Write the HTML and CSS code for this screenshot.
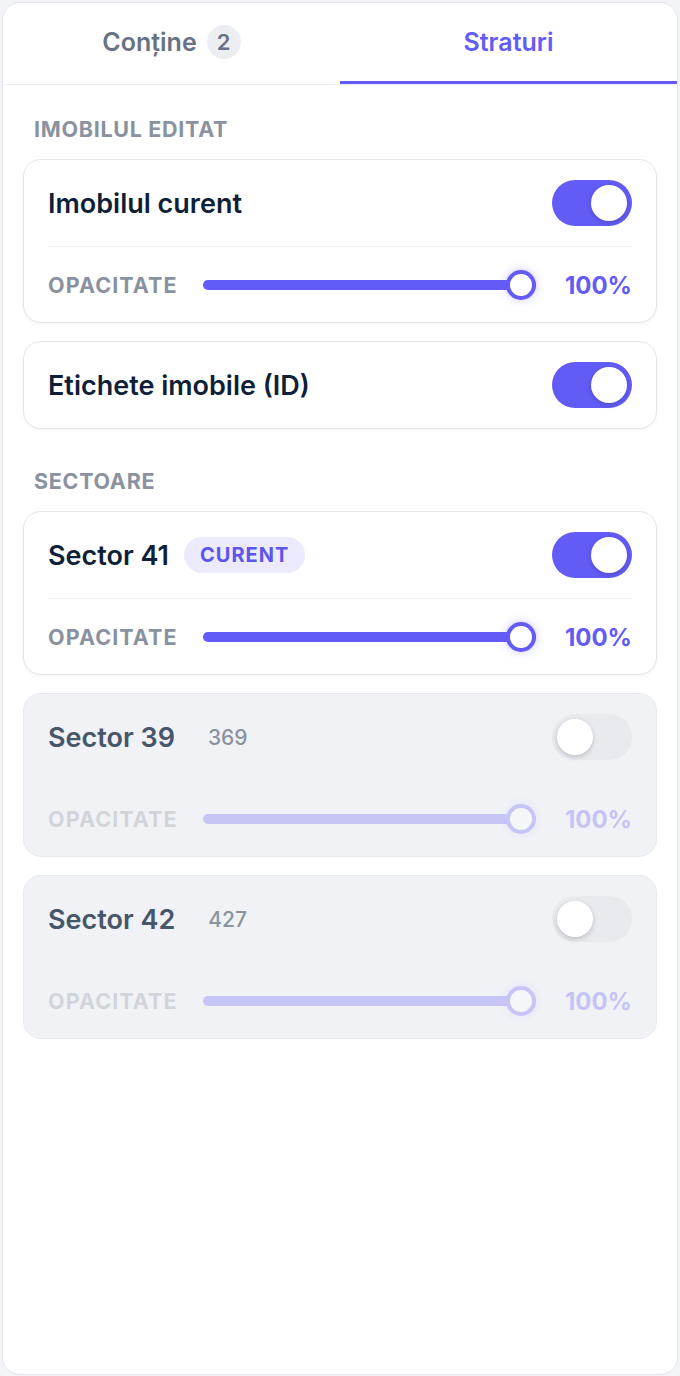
FILE: index.html
```html
<!DOCTYPE html>
<html lang="ro">
<head>
    <meta charset="UTF-8">
    <meta name="viewport" content="width=device-width, initial-scale=1.0">
    <title>Straturi</title>
    <link rel="stylesheet" href="styles.css">
</head>
<body>
    <div class="panel">
        <div class="tabs">
            <div class="tab">Conține <span class="tab-count">2</span></div>
            <div class="tab active">Straturi</div>
        </div>

        <div class="content">
            <div class="section-label">Imobilul editat</div>

            <div class="card">
                <div class="card-head">
                    <span class="card-title">Imobilul curent</span>
                    <span class="toggle on"><span class="knob"></span></span>
                </div>
                <div class="opacity-row">
                    <span class="opacity-label">Opacitate</span>
                    <div class="slider"><div class="fill" style="width: 100%"></div><span class="thumb"></span></div>
                    <span class="opacity-value">100%</span>
                </div>
            </div>

            <div class="card">
                <div class="card-head">
                    <span class="card-title">Etichete imobile (ID)</span>
                    <span class="toggle on"><span class="knob"></span></span>
                </div>
            </div>

            <div class="section-label spaced">Sectoare</div>

            <div class="card">
                <div class="card-head">
                    <span class="card-title">Sector 41</span>
                    <span class="badge">Curent</span>
                    <span class="toggle on"><span class="knob"></span></span>
                </div>
                <div class="opacity-row">
                    <span class="opacity-label">Opacitate</span>
                    <div class="slider"><div class="fill" style="width: 100%"></div><span class="thumb"></span></div>
                    <span class="opacity-value">100%</span>
                </div>
            </div>

            <div class="card disabled">
                <div class="card-head">
                    <span class="card-title">Sector 39</span>
                    <span class="count">369</span>
                    <span class="toggle"><span class="knob"></span></span>
                </div>
                <div class="opacity-row">
                    <span class="opacity-label">Opacitate</span>
                    <div class="slider"><div class="fill" style="width: 100%"></div><span class="thumb"></span></div>
                    <span class="opacity-value">100%</span>
                </div>
            </div>

            <div class="card disabled">
                <div class="card-head">
                    <span class="card-title">Sector 42</span>
                    <span class="count">427</span>
                    <span class="toggle"><span class="knob"></span></span>
                </div>
                <div class="opacity-row">
                    <span class="opacity-label">Opacitate</span>
                    <div class="slider"><div class="fill" style="width: 100%"></div><span class="thumb"></span></div>
                    <span class="opacity-value">100%</span>
                </div>
            </div>
        </div>
    </div>
</body>
</html>
```

FILE: styles.css
```css
body {
    margin: 0;
    background: #f3f4f7;
    font-family: Inter, "Noto Sans", sans-serif;
    color: #0f1f38;
}
.panel {
    margin: 2px;
    height: 1371px;
    background: white;
    border: 1px solid #e4e6eb;
    border-radius: 18px;
    overflow: hidden;
}
.tabs {
    display: grid;
    grid-template-columns: 1fr 1fr;
    height: 81px;
    border-bottom: 1px solid #eceef2;
}
.tab {
    display: flex;
    align-items: center;
    justify-content: center;
    gap: 10px;
    font-size: 25px;
    font-weight: 600;
    color: #687284;
    border-bottom: 3px solid transparent;
}
.tab.active {
    color: #635bf6;
    border-bottom-color: #635bf6;
}
.tab-count {
    display: inline-flex;
    align-items: center;
    justify-content: center;
    width: 34px;
    height: 34px;
    border-radius: 50%;
    background: #eceef2;
    font-size: 22px;
    color: #687284;
}
.content {
    padding: 33px 20px 0;
}
.section-label {
    padding-left: 11px;
    line-height: 22px;
    font-size: 21.5px;
    font-weight: 700;
    letter-spacing: 0.7px;
    text-transform: uppercase;
    color: #8a92a0;
    margin-bottom: 19px;
}
.section-label.spaced {
    margin-top: 41px;
}
.card {
    background: white;
    border: 1px solid #e4e6eb;
    border-radius: 18px;
    padding: 20px 24px;
    margin-bottom: 18px;
    box-shadow: 0 1px 3px rgba(15, 23, 42, 0.05);
}
.card-head {
    display: flex;
    align-items: center;
    height: 46px;
}
.card-title {
    font-size: 27px;
    font-weight: 600;
    color: #0f1f38;
}
.badge {
    margin-left: 15px;
    height: 36px;
    line-height: 36px;
    padding: 0 16px;
    border-radius: 18px;
    background: #ecebfe;
    color: #5d55ee;
    font-size: 20px;
    font-weight: 700;
    letter-spacing: 1px;
    text-transform: uppercase;
}
.count {
    margin-left: 33px;
    font-size: 21px;
    font-weight: 500;
    color: #8a92a0;
}
.toggle {
    margin-left: auto;
    width: 80px;
    height: 46px;
    padding: 5px;
    box-sizing: border-box;
    border-radius: 23px;
    background: #e9eaef;
    display: flex;
}
.toggle.on {
    background: #635bf6;
    justify-content: flex-end;
}
.knob {
    width: 36px;
    height: 36px;
    border-radius: 50%;
    background: white;
    box-shadow: 0 2px 5px rgba(15, 23, 42, 0.2);
}
.opacity-row {
    display: flex;
    align-items: center;
    height: 30px;
    margin-top: 20px;
    margin-bottom: 2px;
    padding-top: 23px;
    border-top: 1px solid #eceef2;
}
.opacity-label {
    width: 155px;
    flex-shrink: 0;
    font-size: 21.5px;
    font-weight: 700;
    letter-spacing: 1.1px;
    text-transform: uppercase;
    color: #8a92a0;
}
.slider {
    position: relative;
    flex: 1;
    height: 10px;
    border-radius: 5px;
    background: #e4e6eb;
}
.fill {
    height: 100%;
    border-radius: 5px;
    background: #635bf6;
}
.thumb {
    position: absolute;
    right: 0;
    top: -10px;
    width: 30px;
    height: 30px;
    box-sizing: border-box;
    border-radius: 50%;
    border: 4px solid #635bf6;
    background: white;
    box-shadow: 0 0 8px rgba(99, 91, 246, 0.35);
}
.opacity-value {
    width: 68px;
    margin-left: 28px;
    text-align: right;
    font-size: 24px;
    font-weight: 700;
    color: #635bf6;
}
.card.disabled {
    background: #f1f2f6;
    border-color: #e9eaef;
    box-shadow: none;
}
.card.disabled .card-title {
    color: #46566b;
}
.card.disabled .opacity-row {
    border-top-color: transparent;
}
.card.disabled .opacity-row > * {
    opacity: 0.3;
}
```
